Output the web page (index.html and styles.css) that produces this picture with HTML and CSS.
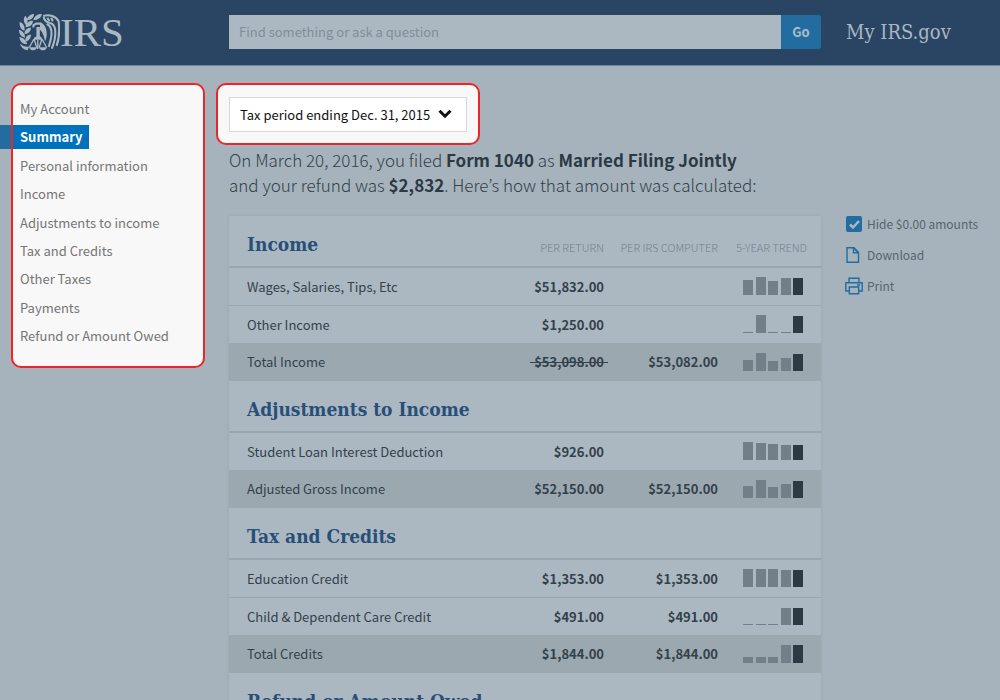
FILE: index.html
```html
<!DOCTYPE html>
<html lang="en">
<head>
<meta charset="utf-8">
<title>My IRS.gov – Summary</title>
<link rel="stylesheet" href="styles.css">
</head>
<body>
<header class="topbar columns">
  <a class="logo" href="#" aria-label="IRS">
    <svg class="eagle" viewBox="0 0 120 108" aria-hidden="true">
      <g fill="currentColor">
        <path d="M2 23c11 4 16 13 14 26C6 45 0 36 2 23z"/>
        <path d="M0 46c10 3 17 10 18 23C6 67 0 59 0 46z"/>
        <path d="M1 68c10 0 19 7 23 20C11 89 3 81 1 68z"/>
        <path d="M18 5c8 7 9 17 4 29-8-8-11-18-4-29z"/>
        <path d="M44 0c0 11-9 18-21 18C25 7 33 0 44 0z"/>
        <path d="M67 0c-3 12-12 18-25 18C45 6 54-1 67 0z"/>
        <path d="M41 20c-1 12-10 18-22 18 2-12 10-19 22-18z"/>
        <path d="M35 40c0 11-8 18-19 19 0-12 7-19 19-19z"/>
        <path d="M35 60c0 11-6 19-16 21-2-12 4-20 16-21z"/>
        <path d="M3 86c8 8 17 11 27 9l-5 11C13 104 5 97 3 86z"/>
        <path d="M51 38h10v27l6 4v6H44v-6l7-4z"/>
        <path d="M62 24c11 4 18 15 19 30 1 10-1 19-5 26-2-15-7-27-15-35z"/>
        <path d="M30 97h23c-2 11-20 13-23 0zM58 97h24c-3 12-21 12-24 0z"/>
      </g>
      <g fill="none" stroke="currentColor" stroke-width="6">
        <path d="M42 39v-6l8-5h11l6 7"/>
        <path d="M71 6c17-7 38 1 45 15 3 27 2 51-6 72"/>
        <path d="M72 8c2 10 9 16 18 18 12 2 15 10 16 21 2 18-2 34-10 54"/>
        <path d="M81 29c13 5 15 17 14 31-1 13-4 23-8 36"/>
        <path d="M83 11l6 10M94 11l5 10"/>
      </g>
      <g fill="none" stroke="currentColor" stroke-width="4">
        <path d="M44 73L30 98M44 73l8 25M67 73l-8 25M67 73l14 25M55 75v27"/>
      </g>
    </svg>
    <span>IRS</span>
  </a>
  <form class="search" role="search">
    <input type="text" aria-label="Search" placeholder="Find something or ask a question">
    <button type="button">Go</button>
  </form>
  <a class="site-name" href="#">My IRS.gov</a>
</header>

<div class="page columns">
  <nav class="side spotlight" aria-label="Account">
    <ul>
      <li><a href="#">My Account</a></li>
      <li><a class="current" href="#" aria-current="page">Summary</a></li>
      <li><a href="#">Personal information</a></li>
      <li><a href="#">Income</a></li>
      <li><a href="#">Adjustments to income</a></li>
      <li><a href="#">Tax and Credits</a></li>
      <li><a href="#">Other Taxes</a></li>
      <li><a href="#">Payments</a></li>
      <li><a href="#">Refund or Amount Owed</a></li>
    </ul>
  </nav>

  <main>
    <div class="period spotlight">
      <div class="select">
        <select aria-label="Tax period">
          <option>Tax period ending Dec. 31, 2015</option>
        </select>
        <svg viewBox="0 0 14 10" width="14" height="10" aria-hidden="true"><path d="M1.500 1.800L7 7.200l5.500-5.400" fill="none" stroke="#111" stroke-width="3"/></svg>
      </div>
    </div>

    <p class="intro">On March 20, 2016, you filed <b>Form 1040</b> as <b>Married Filing Jointly</b><br>and your refund was <b>$2,832</b>. Here’s how that amount was calculated:</p>

    <table class="ledger">
      <colgroup><col><col class="c-return"><col class="c-computer"><col class="c-trend"></colgroup>
      <tbody>
        <tr class="section"><th scope="col"><h2>Income</h2></th><th scope="col">Per return</th><th scope="col">Per IRS computer</th><th scope="col" class="trend">5-year trend</th></tr>
        <tr><td>Wages, Salaries, Tips, Etc</td><td>$51,832.00</td><td></td><td><div class="bars"><i style="height:15px"></i><i style="height:18px"></i><i style="height:14px"></i><i style="height:17px"></i><i style="height:17px"></i></div></td></tr>
        <tr><td>Other Income</td><td>$1,250.00</td><td></td><td><div class="bars"><i style="height:1px"></i><i style="height:18px"></i><i style="height:1px"></i><i style="height:1px"></i><i style="height:17px"></i></div></td></tr>
        <tr class="total"><td>Total Income</td><td><s>$53,098.00</s></td><td>$53,082.00</td><td><div class="bars"><i style="height:11px"></i><i style="height:18px"></i><i style="height:10px"></i><i style="height:13px"></i><i style="height:17px"></i></div></td></tr>
      </tbody>
      <tbody>
        <tr class="section"><th scope="colgroup" colspan="4"><h2>Adjustments to Income</h2></th></tr>
        <tr><td>Student Loan Interest Deduction</td><td>$926.00</td><td></td><td><div class="bars"><i style="height:18px"></i><i style="height:17px"></i><i style="height:16px"></i><i style="height:15px"></i><i style="height:15px"></i></div></td></tr>
        <tr class="total"><td>Adjusted Gross Income</td><td>$52,150.00</td><td>$52,150.00</td><td><div class="bars"><i style="height:12px"></i><i style="height:18px"></i><i style="height:11px"></i><i style="height:14px"></i><i style="height:17px"></i></div></td></tr>
      </tbody>
      <tbody>
        <tr class="section"><th scope="colgroup" colspan="4"><h2>Tax and Credits</h2></th></tr>
        <tr><td>Education Credit</td><td>$1,353.00</td><td>$1,353.00</td><td><div class="bars"><i style="height:18px"></i><i style="height:18px"></i><i style="height:18px"></i><i style="height:17px"></i><i style="height:17px"></i></div></td></tr>
        <tr><td>Child &amp; Dependent Care Credit</td><td>$491.00</td><td>$491.00</td><td><div class="bars"><i style="height:1px"></i><i style="height:1px"></i><i style="height:1px"></i><i style="height:17px"></i><i style="height:17px"></i></div></td></tr>
        <tr class="total"><td>Total Credits</td><td>$1,844.00</td><td>$1,844.00</td><td><div class="bars"><i style="height:6px"></i><i style="height:6px"></i><i style="height:6px"></i><i style="height:18px"></i><i style="height:18px"></i></div></td></tr>
      </tbody>
      <tbody>
        <tr class="section"><th scope="colgroup" colspan="4"><h2>Refund or Amount Owed</h2></th></tr>
      </tbody>
    </table>
  </main>

  <aside class="actions">
    <label><input type="checkbox" checked><span>Hide $0.00 amounts</span></label>
    <a href="#">
      <svg viewBox="0 0 18 18" width="18" height="18" aria-hidden="true"><path d="M2 1.700h7l4.500 4.500v10H2zM8.500 2v4.700h5M9 2.500l4 4" fill="none" stroke="currentColor" stroke-width="1.400"/></svg>
      <span>Download</span>
    </a>
    <a href="#">
      <svg viewBox="0 0 18 18" width="18" height="18" aria-hidden="true"><path d="M4 5.500V1.200h10v4.300M4 14H.8V5.700h16.400V14H14M4.300 10h9.400v6.800H4.300zM12 8h3" fill="none" stroke="currentColor" stroke-width="1.400"/></svg>
      <span>Print</span>
    </a>
  </aside>
</div>
</body>
</html>
```
FILE: styles.css
```css
* { box-sizing: border-box; }

body {
  margin: 0;
  height: 100vh;
  overflow: hidden;
  background: #a6b3bc;
  color: #33414b;
  font: 13px/20px "Noto Sans CJK KR", "Open Sans", sans-serif;
}

a { color: inherit; text-decoration: none; }
svg { display: block; flex: none; }

.columns {
  display: grid;
  grid-template-columns: 204px minmax(0, 1fr) 154px;
  column-gap: 25px;
}

/* Header */
.topbar {
  align-items: center;
  height: 66px;
  padding-bottom: 1px;
  background: #2a4563;
  border-bottom: 1px solid #6f8799;
}

.logo {
  display: flex;
  align-items: center;
  padding-left: 19px;
  color: #a9b8c3;
  font: 41px/36px "Liberation Serif", serif;
}
.eagle { width: 41px; height: 37px; }

.search { display: flex; }
.search input {
  flex: 1;
  min-width: 0;
  height: 34px;
  padding: 0 10px 1px;
  border: 0;
  border-radius: 0;
  background: #abb8c2;
  color: #33414b;
  font: inherit;
}
.search input::placeholder { color: #7f8e98; opacity: 1; }
.search button {
  width: 40px;
  height: 34px;
  padding: 0;
  border: 0;
  border-radius: 0 2px 2px 0;
  background: #236c9f;
  color: #a9bccb;
  font: inherit;
  font-weight: 700;
}

.site-name {
  color: #a9b8c3;
  font: 20px/24px "DejaVu Serif Condensed", "DejaVu Serif", serif;
  white-space: nowrap;
}

/* Highlighted regions */
.spotlight {
  background: #f8f8f8;
  border: 2px solid #ec2529;
  border-radius: 10px;
}

.page { padding-top: 17px; align-items: start; }

.side {
  display: grid;
  min-height: 285px;
  margin: 0 -1px 0 11px;
  padding: 12px 0 18px;
  color: #757575;
}
.side ul {
  display: grid;
  align-content: space-between;
  margin: 0;
  padding: 0;
  list-style: none;
}
.side li { display: flex; }
.side a { padding: 2px 7px; }
.side .current {
  position: relative;
  background: #0071bc;
  color: #fff;
  font-weight: 700;
}
.side .current::before {
  content: "";
  position: absolute;
  top: 0;
  bottom: 0;
  left: -13px;
  width: 11px;
  background: #236c9f;
}

.period {
  width: max-content;
  margin-left: -13px;
  padding: 12px 11px 11px;
}
.select { position: relative; }
.select select {
  appearance: none;
  display: block;
  width: 238px;
  height: 35px;
  padding: 0 30px 0 10px;
  border: 1px solid #d6d7d9;
  border-radius: 0;
  background: #fff;
  color: #111;
  font: inherit;
}
.select svg {
  position: absolute;
  right: 15px;
  top: 12px;
  pointer-events: none;
}

.intro {
  margin: 2px 0 19px;
  font-size: 17px;
  line-height: 25px;
  font-weight: 300;
  white-space: nowrap;
}
.intro b { font-weight: 700; color: #2b3944; }

/* Ledger */
.ledger {
  width: 100%;
  table-layout: fixed;
  border-collapse: separate;
  border-spacing: 0;
  background: #abb8c2;
  box-shadow: 0 0 3px #96a4ad;
}
.c-return { width: 120px; }
.c-computer { width: 114px; }
.c-trend { width: 103px; }

.ledger td, .ledger th { padding: 0; text-align: right; }
.ledger td {
  height: 38px;
  border-bottom: 1px solid #98a6af;
  font-weight: 700;
}
.ledger td:first-child, .ledger th:first-child {
  padding: 0 0 0 18px;
  text-align: left;
}
.ledger td:first-child { font-weight: 400; }
.ledger tr:has(+ .total) td { height: 37px; border-bottom: 0; }
.ledger .total td { background: #9ba8b0; border-bottom: 0; }
.ledger .section th {
  height: 52px;
  padding-top: 12px;
  border-bottom: 2px solid #98a6af;
  color: #74828b;
  font-size: 11px;
  font-weight: 300;
  text-transform: uppercase;
  white-space: nowrap;
}
.ledger .section th:first-child { padding-top: 6px; }
.ledger .section .trend { padding-right: 14px; }
.section h2 {
  margin: 0;
  color: #284f78;
  font: bold 19px/24px "DejaVu Serif Condensed", "DejaVu Serif", serif;
  text-transform: none;
}

s { position: relative; text-decoration: none; }
s::after {
  content: "";
  position: absolute;
  left: -4px;
  right: -4px;
  top: 50%;
  height: 1px;
  background: #33414b;
}

.bars {
  display: flex;
  justify-content: space-between;
  align-items: flex-end;
  width: 60px;
  height: 18px;
  margin: 0 0 1px 25px;
}
.bars i { width: 10px; background: #727f88; }
.bars i:last-child { background: #2d3a44; }

/* Actions */
.actions {
  display: grid;
  gap: 11px;
  margin: 131px 0 0 -1px;
  color: #56646e;
  font-size: 12px;
}
.actions label, .actions a { display: flex; align-items: center; gap: 4px; white-space: nowrap; }
.actions svg { color: #236c9f; }
.actions input {
  appearance: none;
  width: 16px;
  height: 16px;
  margin: 0 1px;
  border-radius: 2px;
  background: #236c9f url("data:image/svg+xml,%3Csvg xmlns='http://www.w3.org/2000/svg' viewBox='0 0 16 16'%3E%3Cpath d='M4 8.500l3 3 6-6.500' fill='none' stroke='%23abb8c2' stroke-width='2.500'/%3E%3C/svg%3E");
}
```
